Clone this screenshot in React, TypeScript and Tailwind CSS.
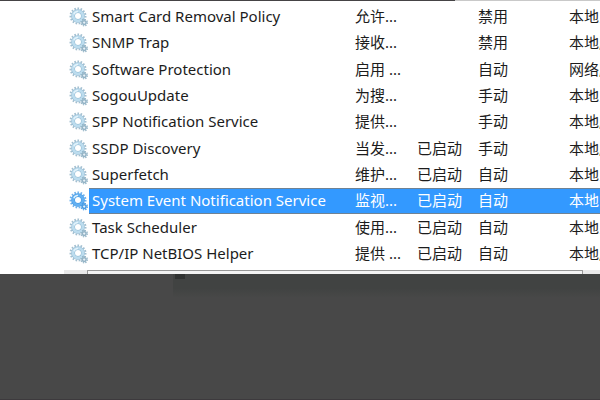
interface Service {
  name: string
  desc: string
  status?: string
  startup: string
  logon: string
}

const SERVICES: Service[] = [
  { name: 'Smart Card Removal Policy', desc: '允许...', startup: '禁用', logon: '本地系统' },
  { name: 'SNMP Trap', desc: '接收...', startup: '禁用', logon: '本地服务' },
  { name: 'Software Protection', desc: '启用 ...', startup: '自动', logon: '网络服务' },
  { name: 'SogouUpdate', desc: '为搜...', startup: '手动', logon: '本地系统' },
  { name: 'SPP Notification Service', desc: '提供...', startup: '手动', logon: '本地服务' },
  { name: 'SSDP Discovery', desc: '当发...', status: '已启动', startup: '手动', logon: '本地服务' },
  { name: 'Superfetch', desc: '维护...', status: '已启动', startup: '自动', logon: '本地系统' },
  { name: 'System Event Notification Service', desc: '监视...', status: '已启动', startup: '自动', logon: '本地系统' },
  { name: 'Task Scheduler', desc: '使用...', status: '已启动', startup: '自动', logon: '本地系统' },
  { name: 'TCP/IP NetBIOS Helper', desc: '提供 ...', status: '已启动', startup: '自动', logon: '本地服务' },
]

const SELECTED = 'System Event Notification Service'

function GearIcon({ active }: { active: boolean }) {
  const teeth = active ? '#6fb2ee' : '#a3bfd0'
  const rim = active ? '#3d93e0' : '#8db6cf'
  const body = active ? '#62b0f2' : '#bcdcee'
  const small = active ? '#4a9ce4' : '#94b4c6'
  return (
    <svg viewBox="0 0 20 20" className="block size-5" aria-hidden="true">
      <circle cx="9" cy="9" r="7.5" fill="none" stroke={teeth} strokeWidth="2" strokeDasharray="1.6 1.541" />
      <circle cx="9" cy="9" r="4.9" fill="#fff" stroke={rim} strokeWidth="3.8" />
      <circle cx="9" cy="9" r="4.9" fill="none" stroke={body} strokeWidth="2.8" />
      <path d="M4.7 7.2A4.7 4.7 0 0 1 9 4.3" fill="none" stroke="#e3f3fb" strokeWidth="1.2" />
      <circle cx="15.2" cy="15.6" r="3.2" fill="none" stroke={small} strokeWidth="1.3" strokeDasharray="1.3 1.213" />
      <circle cx="15.2" cy="15.6" r="1.9" fill="#e8f2f8" stroke={small} strokeWidth="1.5" />
    </svg>
  )
}

export default function App() {
  return (
    <div
      lang="zh-CN"
      className="flex min-h-screen flex-col overflow-hidden bg-[#484848] font-['Noto_Sans','Noto_Sans_CJK_SC',sans-serif] text-[15px] leading-5 text-[#1c1c1c]"
    >
      <div className="flex h-px">
        <div className="w-[455px] bg-[#454345]" />
        <div className="flex-1 bg-[#c9c9c9]" />
      </div>
      <main className="overflow-hidden bg-white pt-[3px] pb-[3px]">
        <table className="h-[263px] w-full table-fixed border-collapse whitespace-nowrap">
          <colgroup>
            <col className="w-[89px]" />
            <col className="w-[263px]" />
            <col className="w-[62px]" />
            <col className="w-[61px]" />
            <col className="w-[91px]" />
            <col />
          </colgroup>
          <tbody>
            {SERVICES.map((s) => {
              const active = s.name === SELECTED
              const cell = active
                ? 'bg-[#3399ff] p-0 pb-0.5 pl-[3px] text-white shadow-[inset_0_1px_#6f8294,inset_0_-1px_#6f8294]'
                : 'p-0 pb-0.5 pl-[3px]'
              return (
                <tr key={s.name} aria-selected={active}>
                  <td className="p-0 pl-[69px]">
                    <GearIcon active={active} />
                  </td>
                  <td className={cell}>{s.name}</td>
                  <td className={cell}>{s.desc}</td>
                  <td className={cell}>{s.status}</td>
                  <td className={cell}>{s.startup}</td>
                  <td className={cell}>{s.logon}</td>
                </tr>
              )
            })}
          </tbody>
        </table>
      </main>
      {/* horizontal scrollbar, cut off by the window below */}
      <div className="flex h-1 bg-white pl-16">
        <div className="flex flex-1 bg-[#e9e9e9] pr-[17px] pl-[23px]">
          <div className="flex-1 rounded-t-[1px] border border-b-0 border-[#979797] bg-[#f3f3f3]" />
        </div>
      </div>
      <div className="flex flex-1 flex-col border-b border-[#3d3a3d]">
        <div className="ml-[173px] h-6 bg-linear-to-b from-[#414342] from-60% to-[#484848] pl-0.5">
          <div className="h-[5px] w-2.5 bg-[#303231]" />
        </div>
      </div>
    </div>
  )
}
